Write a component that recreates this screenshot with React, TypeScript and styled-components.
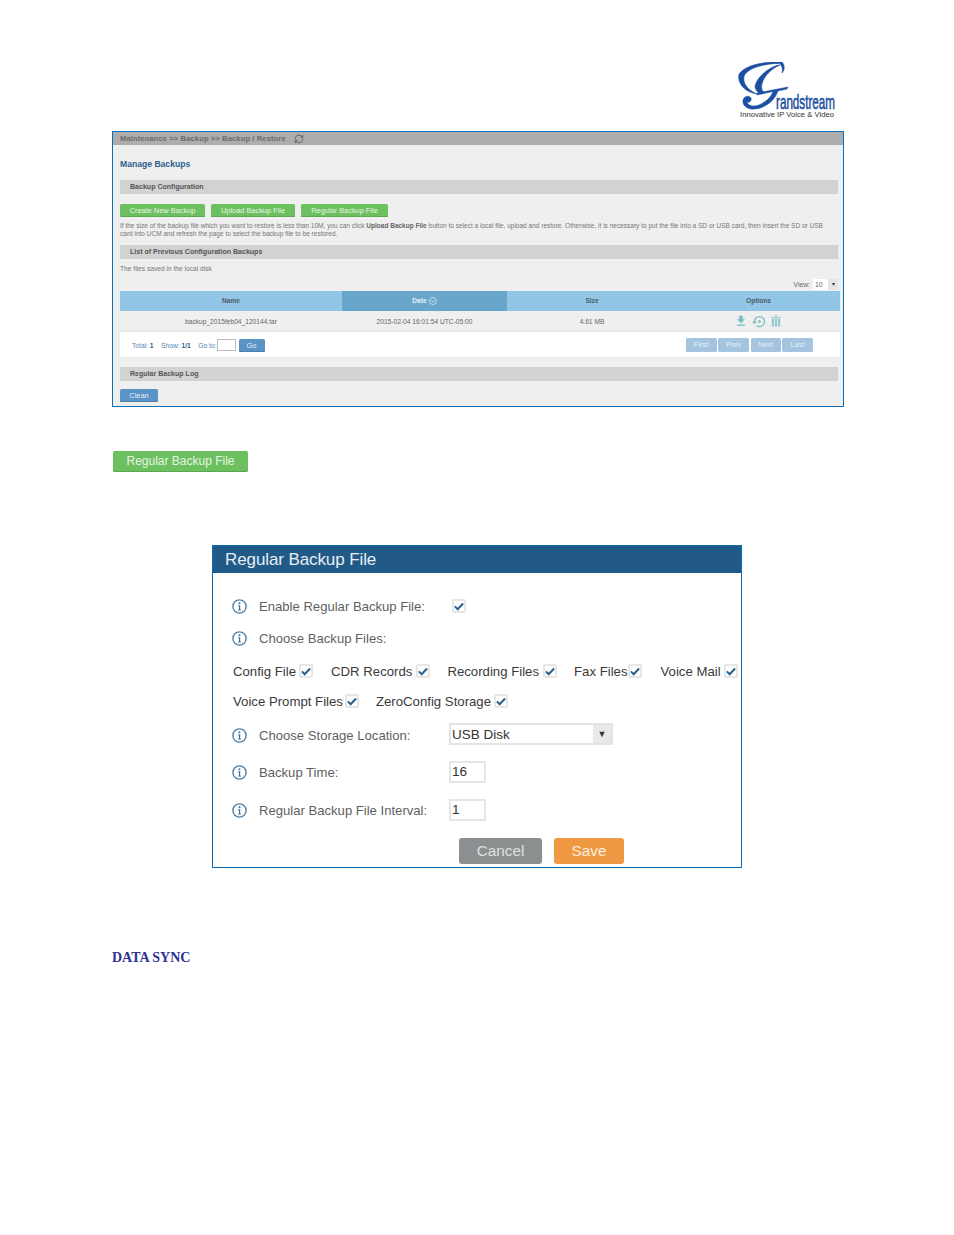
import React from "react";
import styled, { createGlobalStyle } from "styled-components";
import { MdFileDownload, MdSettingsBackupRestore } from "react-icons/md";
import { LuRefreshCw } from "react-icons/lu";

const GlobalStyle = createGlobalStyle`
  html, body {
    margin: 0;
    padding: 0;
    background: #ffffff;
  }
  body {
    font-family: "Liberation Sans", Arial, sans-serif;
  }
`;

const InfoIcon = () => (
  <svg width="15" height="15" viewBox="0 0 15 15" fill="none">
    <circle cx="7.5" cy="7.5" r="6.6" stroke="#4f82ab" strokeWidth="1.4" />
    <circle cx="7.5" cy="4.2" r="1" fill="#3f6f96" />
    <path d="M6.2 6.3h2v4.4h1v.9H6v-.9h1V7.2h-.8z" fill="#3f6f96" />
  </svg>
);

const CheckBox = () => (
  <Box>
    <svg width="11" height="9" viewBox="0 0 11 9" fill="none">
      <path d="M1 4.4l3 3.1L10 1.2" stroke="#2a618f" strokeWidth="2.2" />
    </svg>
  </Box>
);

const TrashIcon = () => (
  <svg width="10" height="12" viewBox="0 0 11 12" fill="#8cc6cb">
    <path d="M0 1.5h11v1H0zM3.5 0h4v1h-4zM1 3.2h2.2V12H1zM4.4 3.2h2.2V12H4.4zM7.8 3.2H10V12H7.8z" />
  </svg>
);

const Logo = () => (
  <svg width="98" height="57" viewBox="0 0 98 57">
    <LogoShape d="M44 0C30 -1 8 2 1 12C-1 20 5 30 19 32C10 28 5 22 6 15C8 6 28 1 44 1.5Z" />
    <LogoShape d="M44 0C47 3 47 8 44 11C45 7 44 4 42 2Z" />
    <LogoShape d="M40 3C30 6 19 15 17 24C17 28 20 31 24 32L26 30C24 29 23 26 24 22C26 14 33 7 42 3Z" />
    <LogoShape d="M19 31L50 25L49 27L40 29C37 38 28 46 17 47C9 48 4 43 5 38C6 34 11 33 13 36C14 39 11 41 9 40C10 44 16 45 21 43C28 40 33 35 35 29.5L19 33Z" />
    <g transform="translate(38 47) scale(0.556 1)">
      <LogoWord>randstream</LogoWord>
    </g>
    <LogoTag x="2" y="55" textLength="94" lengthAdjust="spacingAndGlyphs">
      Innovative IP Voice &amp; Video
    </LogoTag>
  </svg>
);

const rows1 = [
  { label: "Config File", gap: 3, after: 1 },
  { label: "CDR Records", gap: 4, after: 0 },
  { label: "Recording Files", gap: 4, after: 0 },
  { label: "Fax Files", gap: 0, after: 2 },
  { label: "Voice Mail", gap: 3, after: 0 },
];
const rows2 = [
  { label: "Voice Prompt Files", gap: 2, after: 0 },
  { label: "ZeroConfig Storage", gap: 3, after: 0 },
];

const App = () => {
  return (
    <Page>
      <GlobalStyle />
      <LogoRow>
        <Logo />
      </LogoRow>

      <Screen>
        <TitleBar>
          <span>Maintenance &gt;&gt; Backup &gt;&gt; Backup / Restore</span>
          <LuRefreshCw size={10} color="#555" />
        </TitleBar>
        <Content>
          <PageHead>Manage Backups</PageHead>
          <SectionBar>Backup Configuration</SectionBar>
          <ButtonRow>
            <GreenBtn $w={85}>Create New Backup</GreenBtn>
            <GreenBtn $w={84}>Upload Backup File</GreenBtn>
            <GreenBtn $w={87}>Regular Backup File</GreenBtn>
          </ButtonRow>
          <Para>
            If the size of the backup file which you want to restore is less
            than 10M, you can click <b>Upload Backup File</b> button to select a
            local file, upload and restore. Otherwise, it is necessary to put
            the file into a SD or USB card, then insert the SD or USB
            <br />
            card into UCM and refresh the page to select the backup file to be
            restored.
          </Para>
          <SectionBar $top={7}>List of Previous Configuration Backups</SectionBar>
          <SavedNote>The files saved in the local disk</SavedNote>
          <ViewRow>
            <span>View:</span>
            <ViewSelect>
              <span>10</span>
              <ViewArrow>▾</ViewArrow>
            </ViewSelect>
          </ViewRow>
          <Table>
            <HeadRow>
              <HeadCell>Name</HeadCell>
              <HeadCell $sorted>
                Date
                <svg width="8" height="8" viewBox="0 0 8 8" fill="none">
                  <circle cx="4" cy="4" r="3.5" stroke="#e4f0f8" strokeWidth=".7" />
                  <path d="M2.2 3.2L4 5.2l1.8-2" stroke="#e4f0f8" strokeWidth=".7" />
                </svg>
              </HeadCell>
              <HeadCell>Size</HeadCell>
              <HeadCell>Options</HeadCell>
            </HeadRow>
            <DataRow>
              <DataCell>backup_2015feb04_120144.tar</DataCell>
              <DataCell>2015-02-04 16:01:54 UTC-05:00</DataCell>
              <DataCell>4.61 MB</DataCell>
              <DataCell>
                <OptionIcons>
                  <MdFileDownload size={14} />
                  <MdSettingsBackupRestore size={15} />
                  <TrashIcon />
                </OptionIcons>
              </DataCell>
            </DataRow>
            <Footer>
              <Pager>
                <PagerText>
                  Total: <b>1</b>
                </PagerText>
                <PagerText>
                  Show: <b>1/1</b>
                </PagerText>
                <GoWrap>
                  <PagerText>Go to:</PagerText>
                  <GoInput />
                  <BlueBtn $w={26}>Go</BlueBtn>
                </GoWrap>
              </Pager>
              <PageBtns>
                <PageBtn $w={31}>First</PageBtn>
                <PageBtn $w={31}>Prev</PageBtn>
                <PageBtn $w={30}>Next</PageBtn>
                <PageBtn $w={31}>Last</PageBtn>
              </PageBtns>
            </Footer>
          </Table>
          <SectionBar $top={9}>Regular Backup Log</SectionBar>
          <CleanRow>
            <BlueBtn $w={38}>Clean</BlueBtn>
          </CleanRow>
        </Content>
      </Screen>

      <BigGreen>Regular Backup File</BigGreen>

      <Dialog>
        <DialogHead>Regular Backup File</DialogHead>
        <DialogBody>
          <FormRow $top={21} $h={24}>
            <InfoIcon />
            <Label>Enable Regular Backup File:</Label>
            <EnableCheck>
              <CheckBox />
            </EnableCheck>
          </FormRow>
          <FormRow $top={8} $h={24}>
            <InfoIcon />
            <Label>Choose Backup Files:</Label>
          </FormRow>
          <OptionRow $top={9}>
            {rows1.map((o) => (
              <Option key={o.label} $gap={o.gap} $after={o.after}>
                {o.label}
                <CheckBox />
              </Option>
            ))}
          </OptionRow>
          <OptionRow $top={6}>
            {rows2.map((o) => (
              <Option key={o.label} $gap={o.gap} $after={o.after}>
                {o.label}
                <CheckBox />
              </Option>
            ))}
          </OptionRow>
          <FormRow $top={10} $h={24}>
            <InfoIcon />
            <Label>Choose Storage Location:</Label>
            <Select>
              <span>USB Disk</span>
              <SelectArrow>▼</SelectArrow>
            </Select>
          </FormRow>
          <FormRow $top={14} $h={22}>
            <InfoIcon />
            <Label>Backup Time:</Label>
            <Field>16</Field>
          </FormRow>
          <FormRow $top={16} $h={22}>
            <InfoIcon />
            <Label>Regular Backup File Interval:</Label>
            <Field>1</Field>
          </FormRow>
          <DialogButtons>
            <CancelBtn>Cancel</CancelBtn>
            <SaveBtn>Save</SaveBtn>
          </DialogButtons>
        </DialogBody>
      </Dialog>

      <DocHeading>DATA SYNC</DocHeading>
    </Page>
  );
};

export default App;

const Page = styled.div`
  width: 954px;
  height: 1235px;
  overflow: hidden;
  background: #fff;
`;

const LogoRow = styled.div`
  display: flex;
  justify-content: flex-end;
  padding: 62px 118px 0 0;
  height: 131px;
  box-sizing: border-box;
`;

const LogoShape = styled.path`
  fill: #1c4fa1;
  stroke: #1c4fa1;
  stroke-width: 0.5;
`;

const LogoWord = styled.text`
  font-family: "Liberation Sans", sans-serif;
  font-size: 21px;
  fill: #1c4fa1;
  stroke: #1c4fa1;
  stroke-width: 0.6;
`;

const LogoTag = styled.text`
  font-family: "Liberation Sans", sans-serif;
  font-size: 7px;
  fill: #333;
`;

const Screen = styled.div`
  width: 732px;
  height: 276px;
  margin-left: 112px;
  box-sizing: border-box;
  border: 1px solid #0c6fb8;
  background: #efefef;
  color: #666;
`;

const TitleBar = styled.div`
  height: 13px;
  background: #adadad;
  display: flex;
  align-items: center;
  gap: 8px;
  padding-left: 7px;
  font-size: 7.6px;
  font-weight: 700;
  color: #6b6b6b;
  letter-spacing: 0.1px;
`;

const Content = styled.div`
  padding: 0 7px;
`;

const PageHead = styled.div`
  margin-top: 13px;
  height: 12px;
  line-height: 12px;
  font-size: 8.6px;
  font-weight: 700;
  color: #2b5f8e;
`;

const SectionBar = styled.div<{ $top?: number }>`
  margin-top: ${({ $top }) => $top ?? 10}px;
  width: 718px;
  height: 14px;
  line-height: 14px;
  padding-left: 10px;
  box-sizing: border-box;
  background: #d2d2d2;
  font-size: 7.05px;
  font-weight: 700;
  color: #555;
`;

const ButtonRow = styled.div`
  display: flex;
  gap: 6px;
  margin-top: 10px;
`;

const GreenBtn = styled.div<{ $w: number }>`
  width: ${({ $w }) => $w}px;
  height: 13px;
  line-height: 13px;
  text-align: center;
  background: #6cc060;
  border-radius: 1.5px;
  box-shadow: inset 0 -1px 0 #5aa84f;
  color: #e9f6e6;
  font-size: 7.4px;
`;

const Para = styled.div`
  margin-top: 5px;
  width: 716px;
  font-size: 6.53px;
  line-height: 8.2px;
  color: #777;
  white-space: nowrap;

  b {
    color: #666;
  }
`;

const SavedNote = styled.div`
  margin-top: 6px;
  height: 8px;
  line-height: 8px;
  font-size: 6.65px;
  color: #777;
`;

const ViewRow = styled.div`
  margin-top: 5px;
  height: 12px;
  width: 718px;
  display: flex;
  align-items: center;
  justify-content: flex-end;
  gap: 3px;
  font-size: 6.8px;
  color: #666;
`;

const ViewSelect = styled.div`
  display: flex;
  height: 11px;
  width: 25px;
  background: #fff;
  align-items: center;
  padding-left: 2px;
  box-sizing: border-box;
  justify-content: space-between;
`;

const ViewArrow = styled.div`
  width: 10px;
  height: 11px;
  line-height: 11px;
  text-align: center;
  background: #e6e6e6;
  color: #333;
  font-size: 6px;
`;

const Table = styled.div`
  margin-top: 1px;
  width: 720px;
`;

const HeadRow = styled.div`
  display: grid;
  grid-template-columns: 222px 165px 170px 163px;
  height: 20px;
`;

const HeadCell = styled.div<{ $sorted?: boolean }>`
  display: flex;
  align-items: center;
  justify-content: center;
  gap: 2px;
  padding-bottom: 1px;
  box-sizing: border-box;
  font-size: 6.6px;
  font-weight: 700;
  background: ${({ $sorted }) => ($sorted ? "#69a6cb" : "#92c6e6")};
  color: ${({ $sorted }) => ($sorted ? "#e4f0f8" : "#4d5b63")};
`;

const DataRow = styled.div`
  display: grid;
  grid-template-columns: 222px 165px 170px 163px;
  height: 21px;
  background: #efefef;
  border-bottom: 1px solid #e6e6e6;
  box-sizing: border-box;
`;

const DataCell = styled.div`
  display: flex;
  align-items: center;
  justify-content: center;
  font-size: 6.65px;
  color: #666;
`;

const OptionIcons = styled.div`
  display: flex;
  align-items: center;
  gap: 4px;
  margin-right: 3px;
  color: #79bcc2;
`;

const Footer = styled.div`
  height: 26px;
  background: #fff;
  display: flex;
  align-items: center;
  justify-content: space-between;
  padding: 1px 27px 0 12px;
  box-sizing: border-box;
  border-bottom: 1px solid #e8e8e8;
`;

const Pager = styled.div`
  display: flex;
  align-items: center;
  gap: 7.5px;
`;

const PagerText = styled.span`
  font-size: 6.7px;
  color: #4f86b5;

  b {
    color: #2d5f8a;
  }
`;

const GoWrap = styled.div`
  display: flex;
  align-items: center;
`;

const GoInput = styled.div`
  width: 17px;
  height: 10px;
  background: #fff;
  border: 1px solid #bbb;
  margin-right: 3px;
`;

const BlueBtn = styled.div<{ $w: number }>`
  width: ${({ $w }) => $w}px;
  height: 13px;
  line-height: 13px;
  text-align: center;
  background: #5a93c6;
  border-radius: 1.5px;
  box-shadow: inset 0 -1px 0 #4a7fae;
  color: #e6f0f8;
  font-size: 7.4px;
`;

const PageBtns = styled.div`
  display: flex;
  gap: 1.5px;
`;

const PageBtn = styled.div<{ $w: number }>`
  width: ${({ $w }) => $w}px;
  height: 14px;
  line-height: 14px;
  text-align: center;
  background: #a5c4e0;
  border-radius: 1.5px;
  color: #e8f0f7;
  font-size: 7.4px;
`;

const CleanRow = styled.div`
  margin-top: 8px;
`;

const BigGreen = styled.div`
  margin: 44px 0 0 113px;
  width: 135px;
  height: 21px;
  line-height: 21px;
  text-align: center;
  background: #6cc060;
  border-radius: 2px;
  box-shadow: inset 0 -1px 0 #5aa84f;
  color: #e6f5e2;
  font-size: 12px;
`;

const Dialog = styled.div`
  margin: 73px 0 0 212px;
  width: 530px;
  height: 323px;
  box-sizing: border-box;
  border: 1px solid #0f6cb3;
`;

const DialogHead = styled.div`
  height: 27px;
  line-height: 27px;
  padding-left: 12px;
  background: #215a87;
  color: #e6eef5;
  font-size: 17px;
  letter-spacing: -0.1px;
`;

const DialogBody = styled.div`
  padding-left: 19px;
  display: flex;
  flex-direction: column;
`;

const FormRow = styled.div<{ $top: number; $h: number }>`
  margin-top: ${({ $top }) => $top}px;
  height: ${({ $h }) => $h}px;
  display: flex;
  align-items: center;
`;

const Label = styled.div`
  width: 190px;
  margin-left: 12px;
  flex-shrink: 0;
  font-size: 13.1px;
  color: #5f5f5f;
  white-space: nowrap;
`;

const EnableCheck = styled.div`
  display: flex;
  margin-left: 3px;
`;

const Box = styled.span`
  width: 14px;
  height: 14px;
  box-sizing: border-box;
  border: 2px solid #e6e6e6;
  border-radius: 2px;
  display: inline-flex;
  align-items: center;
  justify-content: center;
  background: #fff;
  flex-shrink: 0;
`;

const OptionRow = styled.div<{ $top: number }>`
  margin-top: ${({ $top }) => $top}px;
  height: 24px;
  display: flex;
  align-items: center;
  gap: 17px;
  margin-left: 1px;
`;

const Option = styled.div<{ $gap: number; $after: number }>`
  display: flex;
  align-items: center;
  gap: ${({ $gap }) => $gap}px;
  padding-right: ${({ $after }) => $after}px;
  font-size: 13.2px;
  color: #3a3a3a;
  white-space: nowrap;
`;

const Select = styled.div`
  width: 164px;
  height: 22px;
  margin-bottom: 2px;
  box-sizing: border-box;
  border: 2px solid #e4e4e4;
  display: flex;
  align-items: center;
  justify-content: space-between;
  padding-left: 1px;
  font-size: 13.5px;
  color: #333;
`;

const SelectArrow = styled.div`
  width: 18px;
  height: 100%;
  display: flex;
  align-items: center;
  justify-content: center;
  background: #e8e8e8;
  font-size: 9px;
  color: #333;
`;

const Field = styled.div`
  width: 37px;
  height: 22px;
  box-sizing: border-box;
  border: 2px solid #e6e6e6;
  padding-left: 1px;
  line-height: 18px;
  font-size: 13.5px;
  color: #333;
`;

const DialogButtons = styled.div`
  display: flex;
  gap: 12px;
  margin: 17px 0 0 227px;
`;

const ActionBtn = styled.div`
  height: 26px;
  line-height: 26px;
  text-align: center;
  border-radius: 3px;
  font-size: 15.3px;
  box-sizing: border-box;
`;

const CancelBtn = styled(ActionBtn)`
  width: 83px;
  background: #8c8f8f;
  color: #dfe1e1;
`;

const SaveBtn = styled(ActionBtn)`
  width: 70px;
  background: #ef9a43;
  color: #fdeedd;
`;

const DocHeading = styled.div`
  margin: 82px 0 0 112px;
  font-family: "Liberation Serif", serif;
  font-size: 14px;
  font-weight: 700;
  color: #2e3192;
`;
